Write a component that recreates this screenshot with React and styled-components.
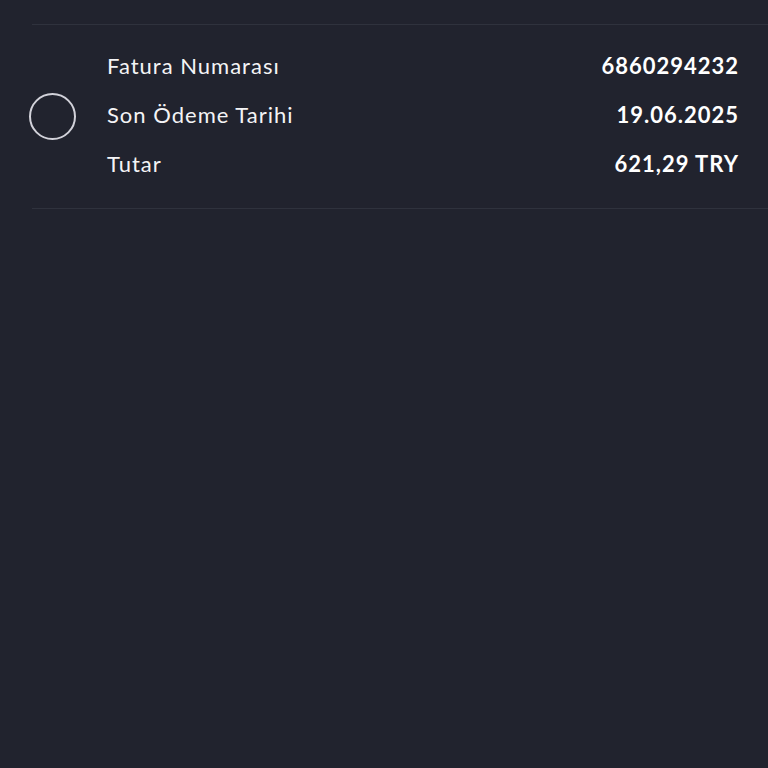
import styled, { createGlobalStyle } from 'styled-components';

const GlobalStyle = createGlobalStyle`
  html, body {
    margin: 0;
    padding: 0;
    background: #21232e;
  }
  body {
    font-family: 'Lato', 'Noto Sans', sans-serif;
    -webkit-font-smoothing: antialiased;
  }
`;

const rows = [
  { label: 'Fatura Numarası', value: '6860294232' },
  { label: 'Son Ödeme Tarihi', value: '19.06.2025' },
  { label: 'Tutar', value: '621,29 TRY' },
];

export default function App() {
  return (
    <Page>
      <GlobalStyle />
      <Item>
        <RadioWrap>
          <Radio />
        </RadioWrap>
        <Details>
          {rows.map((row) => (
            <Row key={row.label}>
              <Label>{row.label}</Label>
              <Value>{row.value}</Value>
            </Row>
          ))}
        </Details>
      </Item>
    </Page>
  );
}

const Page = styled.div`
  width: 768px;
  height: 768px;
  background: #21232e;
  padding: 24px 0 0 32px;
  box-sizing: border-box;
`;

const Item = styled.div`
  display: flex;
  align-items: center;
  border-top: 1px solid #2f323d;
  border-bottom: 1px solid #2f323d;
  padding: 27px 0 30px;
`;

const RadioWrap = styled.div`
  width: 75px;
  display: flex;
  align-items: center;
`;

const Radio = styled.div`
  width: 43px;
  height: 43px;
  border: 2.5px solid #d2d2da;
  border-radius: 50%;
  margin-left: -3px;
  margin-top: 2px;
`;

const Details = styled.div`
  flex: 1;
  display: flex;
  flex-direction: column;
  gap: 21px;
  padding-right: 30px;
`;

const Row = styled.div`
  display: flex;
  justify-content: space-between;
  align-items: baseline;
  height: 28px;
  line-height: 28px;
  font-size: 22px;
  letter-spacing: 1px;
`;

const Label = styled.span`
  color: #f4f4f6;
  font-weight: 400;
`;

const Value = styled.span`
  color: #ffffff;
  font-weight: 700;
  margin-right: -1px;
`;
